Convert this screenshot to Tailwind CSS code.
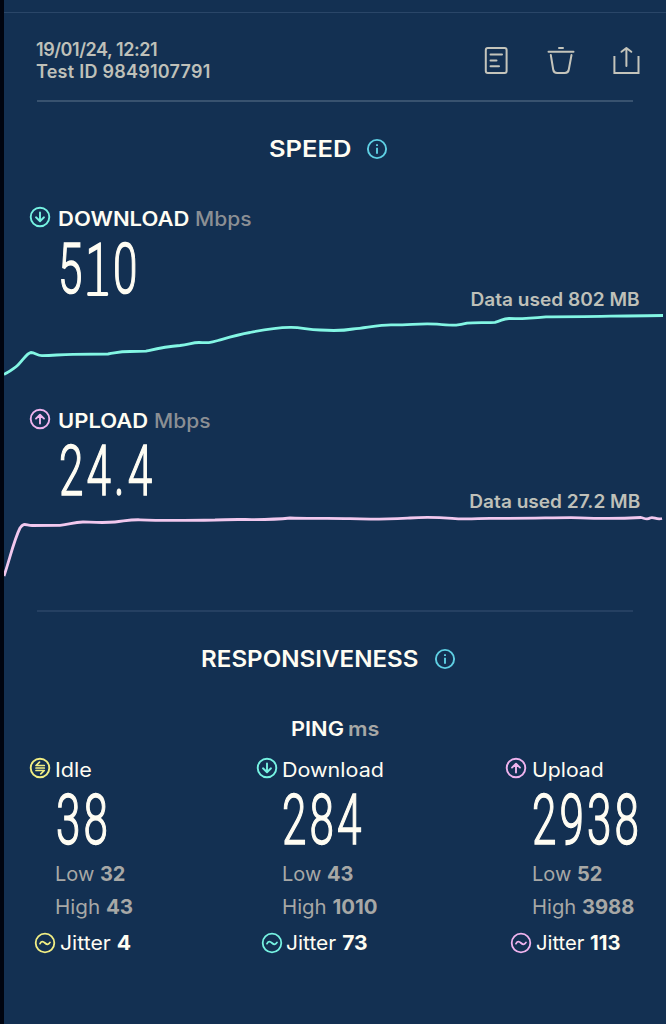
<!DOCTYPE html>
<html lang="en"><head><meta charset="utf-8"><title>Speed test result</title>
<script src="https://cdn.jsdelivr.net/npm/@tailwindcss/browser@4"></script></head>
<body class="bg-[#00040f]">
<svg class="hidden">
  <symbol id="info" viewBox="0 0 22 22"><g fill="none" stroke="currentColor" stroke-width="1.9"><circle cx="11" cy="11" r="9.1"/><path d="M11 9.8V15.8M11 6.3V8.1"/></g></symbol>
  <symbol id="down" viewBox="0 0 22 22"><g fill="none" stroke="currentColor" stroke-width="1.9" stroke-linecap="round" stroke-linejoin="round"><circle cx="11" cy="11" r="9.3"/><path d="M11 6.5V15M7 11.3L11 15.2L15 11.3"/></g></symbol>
  <symbol id="up" viewBox="0 0 22 22"><g fill="none" stroke="currentColor" stroke-width="1.9" stroke-linecap="round" stroke-linejoin="round"><circle cx="11" cy="11" r="9.3"/><path d="M11 15.5V7M7 10.6L11 6.7L15 10.6"/></g></symbol>
  <symbol id="idle" viewBox="0 0 22 22"><g fill="none" stroke="currentColor" stroke-width="1.7" stroke-linecap="round" stroke-linejoin="round"><circle cx="11" cy="11" r="9.3" stroke-width="1.9"/><path d="M10.500 5.200L7 8.500H15.300M7 11H15.300M7 13.500H15.300L11.800 16.800"/></g></symbol>
  <symbol id="jit" viewBox="0 0 22 22"><g fill="none" stroke="currentColor" stroke-width="1.8" stroke-linecap="round"><circle cx="11" cy="11" r="9.3"/><path d="M6 11.6C7.6 8.8 9.2 9.4 11 11C12.8 12.6 14.4 13 16 10.4"/></g></symbol>
</svg>
<main class="ml-1 flex h-[1024px] flex-col overflow-hidden bg-[#133052] font-['Inter',sans-serif] text-[#fffdf3]">
  <div class="h-[13px] shrink-0 border-b border-[#2a4668]"></div>
  <header class="flex h-[87px] shrink-0 justify-between pt-[26px] pr-[26px] pl-[32px] text-[18px] leading-[22px] font-semibold text-[#bfc0b9]">
    <div class="whitespace-nowrap"><div class="tracking-[-0.45px]">19/01/24, 12:21</div><div class="tracking-[0.25px]">Test ID 9849107791</div></div>
    <svg class="mt-[5px] h-[34px] w-[160px]" viewBox="480 44 160 34" fill="none" stroke="#c4c4bb" stroke-width="2" stroke-linecap="round" stroke-linejoin="round">
      <rect x="485.8" y="48" width="20.8" height="25" rx="2"/><path d="M490.500 54.5H502M490.500 60.5H496.500M490.500 66.2H499"/>
      <path d="M548.5 51.7H573.500M559 48H563M550.8 55L553.2 69.500Q553.8 73 557 73H565Q568.2 73 568.8 69.500L571.500 55"/>
      <path stroke-linecap="butt" stroke-linejoin="miter" d="M614.400 56V73H638.500V56"/><path d="M626.400 66V48.500M621.500 51.800L626.400 48L631.300 51.800"/>
    </svg>
  </header>
  <div class="mr-[33px] ml-[33px] h-[2px] shrink-0 bg-[#38526f]"></div>
  <h2 class="mt-8 flex h-[30px] shrink-0 items-center gap-[23px] pl-[265px] text-[23px] leading-[30px] font-semibold"><span class="origin-left scale-x-[1.11]">SPEED</span><svg class="size-[22px] text-[#5fd0e4]"><use href="#info"/></svg></h2>

  <section class="mt-[42px] h-[202px] shrink-0">
    <div class="flex h-[33px] items-start pl-[25px] text-[20px] leading-[26px] font-semibold whitespace-nowrap"><svg class="mr-[7px] size-[22px] text-[#76f2e2]"><use href="#down"/></svg><span class="origin-left scale-x-[1.1]">DOWNLOAD</span><span class="ml-[18px] origin-left scale-x-[1.05] font-medium text-[#8b8f94]">Mbps</span></div>
    <div class="flex h-[72px] justify-between pr-[26px] pl-[54px]">
      <div class="h-[60px] w-[140px] origin-left scale-x-[.62] font-['Roboto'] text-[71px] leading-[60px] font-light tracking-[5px] whitespace-nowrap [-webkit-text-stroke:1.5px_#fffdf3]">5<span class="relative">1<span class="absolute bottom-[14px] left-[3px] h-[4px] w-[34px] rounded-full bg-[#fffdf3]"></span></span>0</div>
      <div class="origin-right scale-x-[1.06] self-end text-[18px] leading-[22px] font-semibold text-[#bfc0b9]">Data used 802 MB</div>
    </div>
    <svg class="block h-[70px] w-full" viewBox="4 311 662 70" fill="none" stroke="#83f6e4" stroke-width="2.8" stroke-linejoin="round"><path d="M4 374.500C10 371 14 369 18 365C23 360 27 353 31 352.500C35 352.500 37 355.500 42 355.700C55 355.500 60 354.300 73 354.300L108 354C120 352 120 351.500 130 351.500L146 351.200C160 348 165 346.700 180 345.500C190 344 193 342.500 199 342.500C208 343 210 342.800 218 340.500C230 337 238 334.500 250 332.500C262 330 275 327.500 290 327.300C302 327 307 330 320 330C335 331 342 331 353 329C370 327 382 324.500 392 324.800C410 325 422 323 437 324.200C455 326 460 325 467 323.200C475 322 487 323 495 322.300C503 320 503 318.700 509 318.500C525 319 530 318.500 546 316.800C580 317 620 315.800 663 315.500"/></svg>
  </section>
  <section class="h-[202px] shrink-0">
    <div class="flex h-[33px] items-start pl-[25px] text-[20px] leading-[26px] font-semibold whitespace-nowrap"><svg class="mr-[7px] size-[22px] text-[#efb3ee]"><use href="#up"/></svg><span class="origin-left scale-x-[1.1]">UPLOAD</span><span class="ml-[14px] origin-left scale-x-[1.05] font-medium text-[#8b8f94]">Mbps</span></div>
    <div class="flex h-[72px] justify-between pr-[26px] pl-[55px]">
      <div class="h-[60px] w-[160px] origin-left scale-x-[.62] font-['Roboto'] text-[71px] leading-[60px] font-light tracking-[5px] whitespace-nowrap [-webkit-text-stroke:1.5px_#fffdf3]">24.4</div>
      <div class="origin-right scale-x-[1.06] self-end text-[18px] leading-[22px] font-semibold text-[#bfc0b9]">Data used 27.2 MB</div>
    </div>
    <svg class="block h-[70px] w-full" viewBox="4 513 662 70" fill="none" stroke="#f1c8ee" stroke-width="2.8" stroke-linejoin="round"><path d="M4 576C10 558 14 540 20 528C24 522 26 525.500 32 525.500L60 525.300C70 524.500 73 522 83 522C98 522.500 105 523 115 522C125 521 130 519.500 140 519.800C165 521 190 520.500 215 520C240 518.500 262 521 290 518C310 519 325 518 350 518.700C375 520 400 518.500 410 518C425 517 440 517.500 452 518.300C465 519.500 475 518.500 490 518.300C530 518.700 560 517.300 580 517.800C600 518.700 620 518.700 641 517.500C645 518.500 647 520 650 518C654 516.500 656 520 662 518.500"/></svg>
  </section>
  <div class="mr-[33px] ml-[33px] h-[2px] shrink-0 bg-[#254062]"></div>
  <h2 class="mt-8 flex h-[30px] shrink-0 items-center gap-[26px] pl-[197px] text-[23px] leading-[30px] font-semibold"><span class="origin-left scale-x-[1.05]">RESPONSIVENESS</span><svg class="size-[22px] text-[#5fd0e4]"><use href="#info"/></svg></h2>
  <div class="mt-[42px] flex h-[41px] shrink-0 gap-2 pl-[287px] text-[20px] leading-[26px] font-semibold"><span class="origin-left scale-x-[1.09]">PING</span><span class="origin-left scale-x-[1.08] text-[#a7a8a6]">ms</span></div>
  <div class="flex text-[20px] leading-[26px] whitespace-nowrap">
    <section class="w-[227px] shrink-0 pl-[25px]">
      <div class="flex h-[33px] items-start gap-1"><svg class="size-[22px] text-[#f1ee84]"><use href="#idle"/></svg><span class="origin-left scale-x-[1.08]">Idle</span></div>
      <div class="ml-[27px] h-[71px] w-[160px] origin-left scale-x-[.62] font-['Roboto'] text-[71px] leading-[60px] font-light tracking-[5px] [-webkit-text-stroke:1.5px_#fffdf3]">38</div>
      <div class="ml-[26px] h-[33px] text-[#a7a8a6]">Low <b class="font-bold">32</b></div>
      <div class="ml-[26px] h-[36px] origin-left scale-x-[1.03] text-[#a7a8a6]">High <b class="font-bold">43</b></div>
      <div class="ml-[5px] flex gap-1"><svg class="mt-[2px] size-[22px] text-[#f1ee84]"><use href="#jit"/></svg><span class="origin-left scale-x-[1.06]">Jitter <b class="font-bold">4</b></span></div>
    </section>
    <section class="w-[250px] shrink-0 pl-[25px]">
      <div class="flex h-[33px] items-start gap-1"><svg class="size-[22px] text-[#76f2e2]"><use href="#down"/></svg><span class="origin-left scale-x-[1.075]">Download</span></div>
      <div class="ml-[26px] h-[71px] w-[160px] origin-left scale-x-[.62] font-['Roboto'] text-[71px] leading-[60px] font-light tracking-[5px] [-webkit-text-stroke:1.5px_#fffdf3]">284</div>
      <div class="ml-[26px] h-[33px] text-[#a7a8a6]">Low <b class="font-bold">43</b></div>
      <div class="ml-[26px] h-[36px] origin-left scale-x-[1.02] text-[#a7a8a6]">High <b class="font-bold">1010</b></div>
      <div class="ml-[5px] flex gap-[3px]"><svg class="mt-[2px] size-[22px] text-[#76f2e2]"><use href="#jit"/></svg><span class="origin-left scale-x-[1.05]">Jitter <b class="font-bold">73</b></span></div>
    </section>
    <section class="w-[185px] shrink-0 pl-[24px]">
      <div class="flex h-[33px] items-start gap-[5px]"><svg class="size-[22px] text-[#efb3ee]"><use href="#up"/></svg><span class="origin-left scale-x-[1.06]">Upload</span></div>
      <div class="ml-[27px] h-[71px] w-[160px] origin-left scale-x-[.62] font-['Roboto'] text-[71px] leading-[60px] font-light tracking-[5px] [-webkit-text-stroke:1.5px_#fffdf3]">2938</div>
      <div class="ml-[27px] h-[33px] text-[#a7a8a6]">Low <b class="font-bold">52</b></div>
      <div class="ml-[27px] h-[36px] origin-left scale-x-[1.01] text-[#a7a8a6]">High <b class="font-bold">3988</b></div>
      <div class="ml-[5px] flex gap-1"><svg class="mt-[2px] size-[22px] text-[#efb3ee]"><use href="#jit"/></svg><span class="origin-left scale-x-[1.01]">Jitter <b class="font-bold">113</b></span></div>
    </section>
  </div>
</main>
</body></html>
